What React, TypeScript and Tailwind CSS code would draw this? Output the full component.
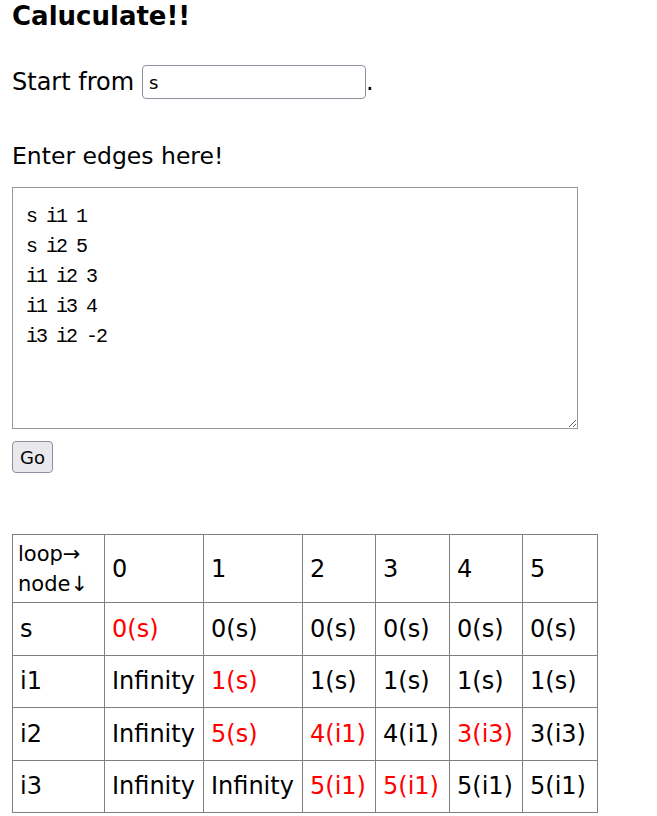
import React from "react";

const cols = ["0", "1", "2", "3", "4", "5"];

type Cell = { v: string; red?: boolean };

const rows: { node: string; cells: Cell[] }[] = [
  {
    node: "s",
    cells: [
      { v: "0(s)", red: true },
      { v: "0(s)" },
      { v: "0(s)" },
      { v: "0(s)" },
      { v: "0(s)" },
      { v: "0(s)" },
    ],
  },
  {
    node: "i1",
    cells: [
      { v: "Infinity" },
      { v: "1(s)", red: true },
      { v: "1(s)" },
      { v: "1(s)" },
      { v: "1(s)" },
      { v: "1(s)" },
    ],
  },
  {
    node: "i2",
    cells: [
      { v: "Infinity" },
      { v: "5(s)", red: true },
      { v: "4(i1)", red: true },
      { v: "4(i1)" },
      { v: "3(i3)", red: true },
      { v: "3(i3)" },
    ],
  },
  {
    node: "i3",
    cells: [
      { v: "Infinity" },
      { v: "Infinity" },
      { v: "5(i1)", red: true },
      { v: "5(i1)", red: true },
      { v: "5(i1)" },
      { v: "5(i1)" },
    ],
  },
];

const colW = ["w-[92px]", "w-[99px]", "w-[99px]", "w-[73px]", "w-[74px]", "w-[73px]", "w-[75px]"];

export default function App() {
  return (
    <div className="px-3 text-black bg-white min-h-screen font-['DejaVu_Sans',sans-serif]">
      <h2 className="text-[26px] font-bold leading-[32px] pt-0">Caluculate!!</h2>

      <div className="mt-[33px] flex items-center h-[34px] text-[24px]">
        <span>Start from</span>
        <input
          defaultValue="s"
          className="ml-[8px] w-[224px] h-[34px] border border-[#8f8f9d] rounded-[4px] px-[6px] text-[18px] outline-none"
        />
        <span>.</span>
      </div>

      <p className="mt-[42px] text-[23.5px] leading-[30px]">Enter edges here!</p>

      <textarea
        defaultValue={"s i1 1\ns i2 5\ni1 i2 3\ni1 i3 4\ni3 i2 -2"}
        className="block mt-[16px] w-[566px] h-[242px] border border-[#999] px-[13px] pt-[14px] font-['Liberation_Mono',monospace] text-[20px] tracking-[-2px] leading-[30px] outline-none"
      />

      <button className="block mt-[12px] h-[32px] px-[7px] bg-[#e9e9ed] border border-[#8f8f9d] rounded-[4px] text-[18px]">
        Go
      </button>

      <table className="mt-[61px] border-collapse border border-[#808080] text-[24px]">
        <thead>
          <tr className="h-[68px]">
            <td className={`${colW[0]} border border-[#808080] px-[5px] text-[21px] leading-[30px]`}>
              loop→
              <br />
              node↓
            </td>
            {cols.map((c, i) => (
              <td key={c} className={`${colW[i + 1]} border border-[#808080] px-[7px]`}>
                {c}
              </td>
            ))}
          </tr>
        </thead>
        <tbody>
          {rows.map((r) => (
            <tr key={r.node} className="h-[52.5px]">
              <td className="border border-[#808080] px-[7px]">{r.node}</td>
              {r.cells.map((c, i) => (
                <td
                  key={i}
                  className={`border border-[#808080] px-[7px] whitespace-nowrap ${c.red ? "text-[#ff0000]" : ""}`}
                >
                  {c.v}
                </td>
              ))}
            </tr>
          ))}
        </tbody>
      </table>
    </div>
  );
}
